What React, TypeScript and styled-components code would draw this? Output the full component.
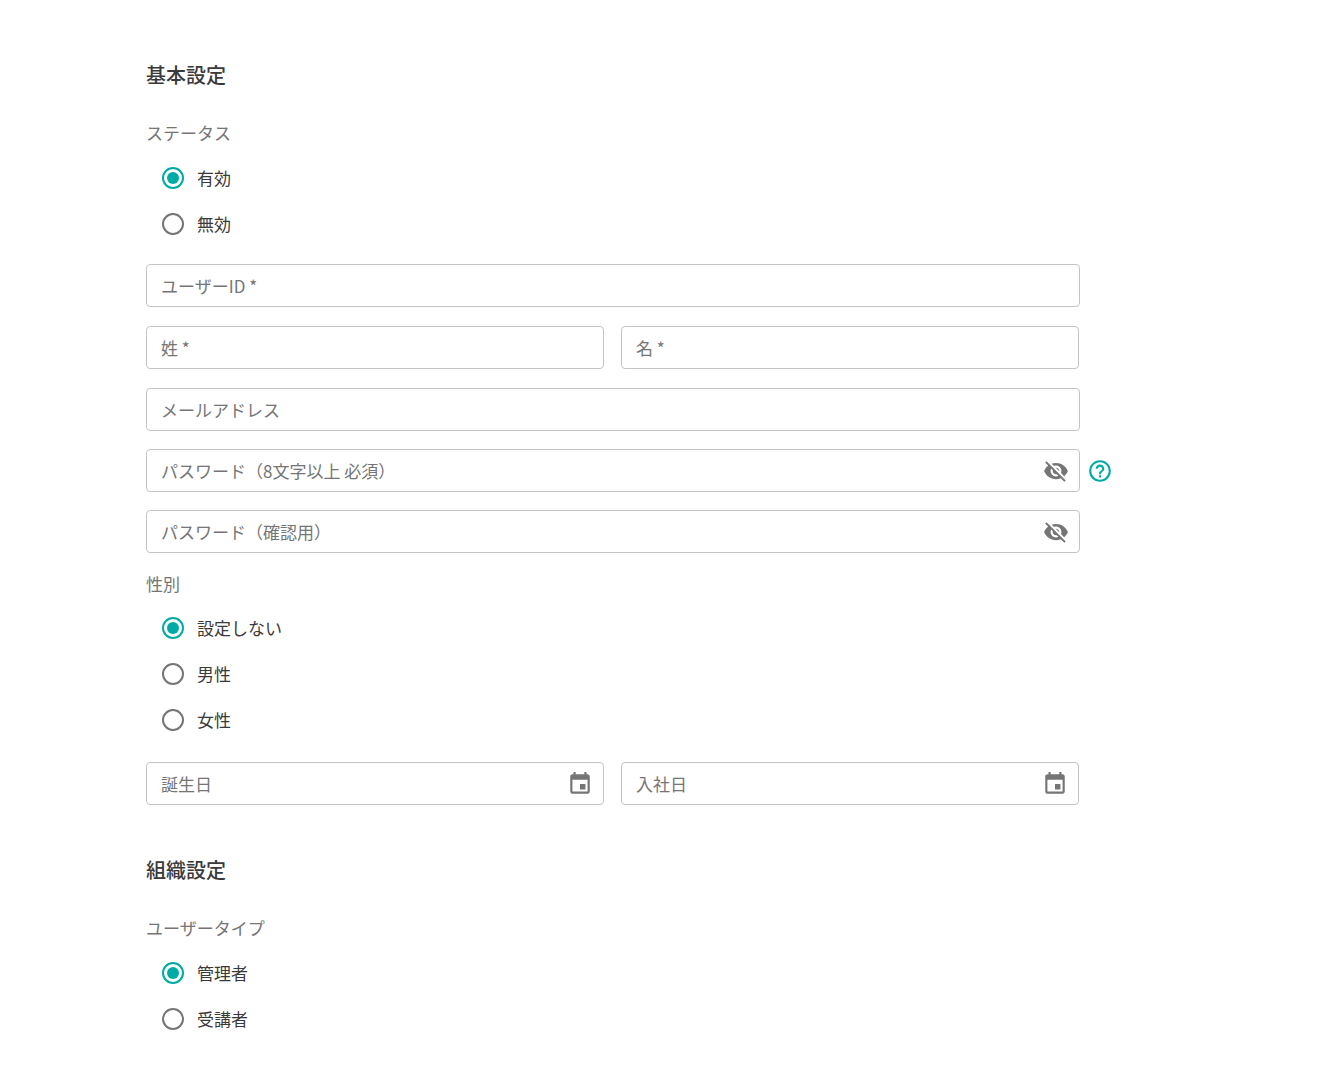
import React, { useId, useState } from "react";
import styled, { createGlobalStyle, css } from "styled-components";
import { MdEvent, MdHelpOutline, MdVisibility, MdVisibilityOff } from "react-icons/md";

const teal = "#00aba6";
const textMain = "#3a3a3a";
const textSub = "#757575";
const line = "#c4c4c4";

const GlobalStyle = createGlobalStyle`
  *, *::before, *::after { box-sizing: border-box; }
  body {
    margin: 0;
    background: #ffffff;
    color: ${textMain};
    font-family: "Noto Sans CJK JP", "Noto Sans", sans-serif;
    font-size: 17px;
    line-height: 24px;
  }
  button, input { font: inherit; color: inherit; }
`;

const Page = styled.main`
  max-width: 1084px;
  margin: 0 auto;
  padding: 60px 24px 32px;
`;

const Section = styled.section`
  display: grid;
  grid-template-columns: minmax(0, 1fr) 102px;

  & + & {
    margin-top: 50px;
  }
  & > * {
    grid-column: 1;
  }
`;

const Heading = styled.h2`
  margin: 0 0 31px;
  font-size: 20px;
  font-weight: 500;
  line-height: 30px;
`;

const Group = styled.fieldset`
  margin: 0;
  padding: 0;
  border: 0;
  min-width: 0;
`;

const Legend = styled.legend<{ $gap: number }>`
  padding: 0;
  margin-bottom: ${(p) => p.$gap}px;
  color: ${textSub};
`;

const Option = styled.label`
  display: flex;
  align-items: center;
  gap: 13px;
  width: fit-content;
  height: 46px;
  padding-left: 16px;
  cursor: pointer;
`;

const Radio = styled.input`
  appearance: none;
  display: grid;
  place-items: center;
  width: 22px;
  height: 22px;
  margin: 0;
  border: 2px solid ${textSub};
  border-radius: 50%;
  cursor: pointer;

  &:checked {
    border-color: ${teal};
  }
  &:checked::before {
    content: "";
    width: 12px;
    height: 12px;
    border-radius: 50%;
    background: ${teal};
  }
`;

const Stack = styled.div<{ $gap: number; $top: number }>`
  display: grid;
  gap: ${(p) => p.$gap}px;
  margin-top: ${(p) => p.$top}px;
`;

const Pair = styled.div`
  display: grid;
  grid-template-columns: repeat(2, minmax(0, 1fr));
  gap: 17px;
  padding-right: 1px;
`;

const Frame = styled.div`
  position: relative;
  display: flex;
  align-items: center;
  height: 43px;
  padding-right: 10px;
  border: 1px solid ${line};
  border-radius: 4px;

  &:focus-within {
    border-color: ${teal};
  }
`;

const raised = css`
  top: -12px;
  left: 10px;
  padding: 0 4px;
  background: #ffffff;
  font-size: 13px;
`;

const FloatLabel = styled.label`
  position: absolute;
  top: 9px;
  left: 14px;
  color: ${textSub};
  pointer-events: none;
`;

const Control = styled.input`
  flex: 1;
  min-width: 0;
  height: 100%;
  padding: 0 14px;
  border: 0;
  outline: 0;
  background: transparent;

  &:focus + ${FloatLabel}, &:not(:placeholder-shown) + ${FloatLabel} {
    ${raised}
  }
`;

const IconButton = styled.button<{ $tone?: string }>`
  display: flex;
  padding: 0;
  border: 0;
  background: none;
  color: ${(p) => p.$tone ?? textSub};
  cursor: pointer;

  svg {
    width: 26px;
    height: 26px;
  }
`;

const HelpRow = styled.div`
  display: flex;
  align-items: center;
  gap: 7px;
  margin-right: -33px;

  & > ${Frame} {
    flex: 1;
  }
`;

type FieldProps = { label: string; type?: string; action?: React.ReactNode };

function Field({ label, type = "text", action }: FieldProps) {
  const id = useId();
  return (
    <Frame>
      <Control id={id} type={type} placeholder=" " />
      <FloatLabel htmlFor={id}>{label}</FloatLabel>
      {action}
    </Frame>
  );
}

function PasswordField({ label }: { label: string }) {
  const [shown, setShown] = useState(false);
  return (
    <Field
      label={label}
      type={shown ? "text" : "password"}
      action={
        <IconButton type="button" aria-label="パスワードの表示切替" onClick={() => setShown(!shown)}>
          {shown ? <MdVisibility /> : <MdVisibilityOff />}
        </IconButton>
      }
    />
  );
}

function DateField({ label }: { label: string }) {
  return (
    <Field
      label={label}
      action={
        <IconButton type="button" aria-label="日付を選択">
          <MdEvent />
        </IconButton>
      }
    />
  );
}

type RadioGroupProps = { legend: string; options: string[]; gap?: number };

function RadioGroup({ legend, options, gap = 10 }: RadioGroupProps) {
  const name = useId();
  return (
    <Group>
      <Legend $gap={gap}>{legend}</Legend>
      {options.map((option, i) => (
        <Option key={option}>
          <Radio type="radio" name={name} value={option} defaultChecked={i === 0} />
          {option}
        </Option>
      ))}
    </Group>
  );
}

export default function App() {
  return (
    <>
      <GlobalStyle />
      <Page>
        <Section>
          <Heading>基本設定</Heading>
          <RadioGroup legend="ステータス" options={["有効", "無効"]} />
          <Stack $gap={19} $top={17}>
            <Field label="ユーザーID *" />
            <Pair>
              <Field label="姓 *" />
              <Field label="名 *" />
            </Pair>
            <Field label="メールアドレス" type="email" />
          </Stack>
          <Stack $gap={18} $top={18}>
            <HelpRow>
              <PasswordField label="パスワード（8文字以上 必須）" />
              <IconButton type="button" aria-label="ヘルプ" $tone={teal}>
                <MdHelpOutline />
              </IconButton>
            </HelpRow>
            <PasswordField label="パスワード（確認用）" />
          </Stack>
          <Stack $gap={19} $top={19}>
            <RadioGroup legend="性別" options={["設定しない", "男性", "女性"]} gap={9} />
            <Pair>
              <DateField label="誕生日" />
              <DateField label="入社日" />
            </Pair>
          </Stack>
        </Section>
        <Section>
          <Heading>組織設定</Heading>
          <RadioGroup legend="ユーザータイプ" options={["管理者", "受講者"]} />
        </Section>
      </Page>
    </>
  );
}
